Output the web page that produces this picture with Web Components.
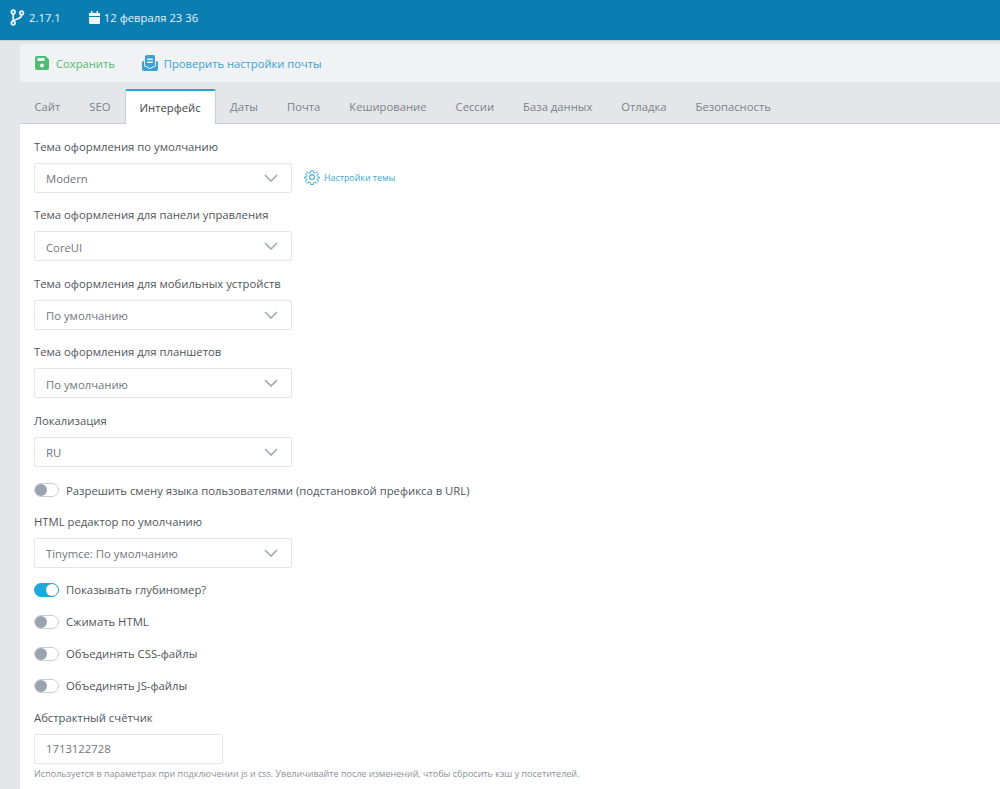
<!DOCTYPE html>
<html lang="ru">
<head>
<meta charset="utf-8">
<title>Настройки</title>
<style>
  html, body { margin: 0; height: 789px; overflow: hidden; }
  body { background: #e4e6e9; font-family: "Open Sans", "Noto Sans", sans-serif; font-size: 11.3px; color: #50565c; }
  cms-page { display: block; }
</style>
</head>
<body>
<cms-page>
  <cms-header slot="header" version="2.17.1" date="12 февраля 23 36"></cms-header>
  <cms-toolbar></cms-toolbar>
  <cms-tabs active="Интерфейс"></cms-tabs>
  <cms-panel>
    <cms-select label="Тема оформления по умолчанию" value="Modern">
      <a slot="after" style="display:flex;align-items:center;gap:4px;color:#3ba9d6;font-size:8.9px;text-decoration:none;margin-top:-1px">
        <svg width="16" height="16" viewBox="0 0 24 24" fill="none" stroke="#3ba9d6" stroke-width="1.6" stroke-linejoin="round"><circle cx="12" cy="12" r="3.6"/><path d="M10 1.500h4l.7 3.200 2.200.9 2.800-1.800 2.800 2.800-1.800 2.800.9 2.200 3.200.7v1.400l-3.200.7-.9 2.200 1.800 2.800-2.800 2.800-2.800-1.800-2.200.9-.7 3.200h-4l-.7-3.200-2.200-.9-2.800 1.800-2.800-2.800 1.800-2.800-.9-2.200-3.200-.7v-1.400l3.200-.7.9-2.200-1.800-2.800 2.800-2.800 2.800 1.800 2.200-.9z" transform="translate(1.200 1.200) scale(.9)"/></svg>
        Настройки темы
      </a>
    </cms-select>
    <cms-select label="Тема оформления для панели управления" value="CoreUI"></cms-select>
    <cms-select label="Тема оформления для мобильных устройств" value="По умолчанию"></cms-select>
    <cms-select label="Тема оформления для планшетов" value="По умолчанию"></cms-select>
    <cms-select label="Локализация" value="RU"></cms-select>
    <cms-switch label="Разрешить смену языка пользователями (подстановкой префикса в URL)"></cms-switch>
    <cms-select label="HTML редактор по умолчанию" value="Tinymce: По умолчанию" style="margin-top:15px"></cms-select>
    <cms-switch label="Показывать глубиномер?" checked style="margin-top:-1px"></cms-switch>
    <cms-switch label="Сжимать HTML" style="margin-top:15px"></cms-switch>
    <cms-switch label="Объединять CSS-файлы" style="margin-top:15px"></cms-switch>
    <cms-switch label="Объединять JS-файлы" style="margin-top:15px"></cms-switch>
    <cms-text-field label="Абстрактный счётчик" value="1713122728" hint="Используется в параметрах при подключении js и css. Увеличивайте после изменений, чтобы сбросить кэш у посетителей." style="margin-top:15.500px"></cms-text-field>
  </cms-panel>
</cms-page>

<script>
class CmsPage extends HTMLElement {
  constructor() {
    super();
    this.attachShadow({ mode: "open" });
    this.shadowRoot.innerHTML = `
      <style>
        :host { display: block; }
        .wrap { padding-left: 20px; }
      </style>
      <slot name="header"></slot>
      <div class="wrap"><slot></slot></div>
    `;
  }
}

class CmsHeader extends HTMLElement {
  constructor() {
    super();
    this.attachShadow({ mode: "open" });
    this.shadowRoot.innerHTML = `
      <style>
        :host { display: block; height: 40px; background: #0a7eb0; border-bottom: 1px solid #c9d2d9; color: #e6f2f8; font-size: 11.300px; }
        .bar { display: flex; align-items: center; height: 34px; padding-left: 10px; }
        .item { display: flex; align-items: center; }
        .ver { margin-left: 4px; margin-right: 28px; }
        .date { margin-left: 4px; }
      </style>
      <div class="bar">
        <div class="item">
          <svg width="15" height="17" viewBox="0 0 15 17" fill="none" stroke="#eef6fa" stroke-width="1.7"><circle cx="3.200" cy="3" r="1.800"/><circle cx="3.200" cy="14" r="1.800"/><circle cx="11.600" cy="4" r="1.800"/><path d="M3.200 5v7M11.600 6c0 3-3 3.600-5 4.200-1.600.5-3 1-3.400 2"/></svg>
          <span class="ver">${this.getAttribute("version")}</span>
        </div>
        <div class="item">
          <svg width="11" height="13" viewBox="0 0 11 13" fill="#eef6fa"><path d="M2 0h1.500v2h4V0H9v2h2v3H0V2h2zM0 6h11v6a1 1 0 0 1-1 1H1a1 1 0 0 1-1-1z"/></svg>
          <span class="date">${this.getAttribute("date")}</span>
        </div>
      </div>
    `;
  }
}

class CmsToolbar extends HTMLElement {
  constructor() {
    super();
    this.attachShadow({ mode: "open" });
    this.shadowRoot.innerHTML = `
      <style>
        :host { display: flex; align-items: center; gap: 27px; height: 38px; margin-top: 3px; padding-left: 15px; background: #f0f2f4; border-radius: 3px 0 0 3px; font-size: 11.200px; }
        a { display: flex; align-items: center; gap: 7px; }
        .save { color: #4dbd74; }
        .mail { color: #3ba3d4; gap: 6px; }
      </style>
      <a class="save">
        <svg width="14" height="14" viewBox="0 0 14 14"><path fill="#4dbd74" fill-rule="evenodd" d="M2 0h8.500L14 3.500V12a2 2 0 0 1-2 2H2a2 2 0 0 1-2-2V2a2 2 0 0 1 2-2zm.5 2v3h7V2zM7 7.500a2 2 0 1 0 0 4 2 2 0 0 0 0-4z"/></svg>
        Сохранить
      </a>
      <a class="mail">
        <svg width="16" height="16" viewBox="0 0 16 16"><path fill="#3ba3d4" d="M0 7l2-1.500V11l6 3 6-3V5.500L16 7v7a2 2 0 0 1-2 2H2a2 2 0 0 1-2-2z"/><path fill="#3ba3d4" fill-rule="evenodd" d="M5 0h6a2 2 0 0 1 2 2v8.500l-5 2.500-5-2.500V2a2 2 0 0 1 2-2zm.2 3.600v1.300h5.600V3.600zm0 3v1.300h5.600V6.600z"/></svg>
        Проверить настройки почты
      </a>
    `;
  }
}

class CmsTabs extends HTMLElement {
  constructor() {
    super();
    this.attachShadow({ mode: "open" });
    this.names = ["Сайт", "SEO", "Интерфейс", "Даты", "Почта", "Кеширование", "Сессии", "База данных", "Отладка", "Безопасность"];
    const active = this.getAttribute("active");
    this.shadowRoot.innerHTML = `
      <style>
        :host { display: flex; height: 34px; margin-top: 7px; border-bottom: 1px solid #c8ced3; font-size: 11.250px; color: #7b8389; }
        .tab { display: flex; align-items: center; padding: 1px 14.500px 0; height: 34px; box-sizing: border-box; }
        .tab.on { background: #fff; color: #3e444a; border: 1px solid #c8ced3; border-top: 2px solid #20a8d8; border-bottom: none; height: 35px; border-radius: 2px 2px 0 0; padding: 0 14px 0 13.500px; }
      </style>
      ${this.names.map((n) => `<div class="tab ${n === active ? "on" : ""}">${n}</div>`).join("")}
    `;
  }
}

class CmsPanel extends HTMLElement {
  constructor() {
    super();
    this.attachShadow({ mode: "open" });
    this.shadowRoot.innerHTML = `
      <style>
        :host { display: block; background: #fff; padding: 14.600px 14px 0; height: 665px; box-sizing: border-box; }
      </style>
      <slot></slot>
    `;
  }
}

class CmsSelect extends HTMLElement {
  constructor() {
    super();
    this.attachShadow({ mode: "open" });
    this.shadowRoot.innerHTML = `
      <style>
        :host { display: block; margin-bottom: 14.600px; }
        label { display: block; height: 16px; line-height: 16px; margin-bottom: 8px; }
        .row { display: flex; align-items: center; gap: 12px; }
        .box { display: flex; align-items: center; justify-content: space-between; box-sizing: border-box; width: 258px; height: 30px; padding: 0 13px 0 11px; border: 1px solid #e3e6e9; border-radius: 2px; color: #6f767c; background: #fff; }
        .box span { padding-top: 2px; }
      </style>
      <label>${this.getAttribute("label")}</label>
      <div class="row">
        <div class="box">
          <span>${this.getAttribute("value")}</span>
          <svg width="14" height="8" viewBox="0 0 14 8" fill="none" stroke="#a4abb1" stroke-width="1.700"><path d="M1 1l6 6 6-6"/></svg>
        </div>
        <slot name="after"></slot>
      </div>
    `;
  }
}

class CmsSwitch extends HTMLElement {
  constructor() {
    super();
    this.attachShadow({ mode: "open" });
    const on = this.hasAttribute("checked");
    this.shadowRoot.innerHTML = `
      <style>
        :host { display: flex; align-items: center; gap: 7px; height: 17px; }
        .track { position: relative; box-sizing: border-box; width: 25px; height: 14px; border-radius: 7px; border: 1px solid ${on ? "#20a8d8" : "#c8ced3"}; background: ${on ? "#20a8d8" : "#fff"}; }
        .knob { position: absolute; top: 0; ${on ? "right: 0" : "left: 0"}; width: 12px; height: 12px; border-radius: 50%; background: ${on ? "#fff" : "#9aa4ae"}; }
      </style>
      <span class="track"><span class="knob"></span></span>
      <span>${this.getAttribute("label")}</span>
    `;
  }
}

class CmsTextField extends HTMLElement {
  constructor() {
    super();
    this.attachShadow({ mode: "open" });
    this.shadowRoot.innerHTML = `
      <style>
        :host { display: block; }
        label { display: block; height: 16px; line-height: 16px; margin-bottom: 8px; }
        .box { display: flex; align-items: center; box-sizing: border-box; width: 189px; height: 30px; padding: 0 11px; border: 1px solid #e3e6e9; border-radius: 2px; color: #6f767c; }
        small { display: block; margin-top: 3px; line-height: 14px; font-size: 9px; color: #8a9198; white-space: nowrap; }
      </style>
      <label>${this.getAttribute("label")}</label>
      <div class="box">${this.getAttribute("value")}</div>
      <small>${this.getAttribute("hint")}</small>
    `;
  }
}

customElements.define("cms-page", CmsPage);
customElements.define("cms-header", CmsHeader);
customElements.define("cms-toolbar", CmsToolbar);
customElements.define("cms-tabs", CmsTabs);
customElements.define("cms-panel", CmsPanel);
customElements.define("cms-select", CmsSelect);
customElements.define("cms-switch", CmsSwitch);
customElements.define("cms-text-field", CmsTextField);
</script>
</body>
</html>
